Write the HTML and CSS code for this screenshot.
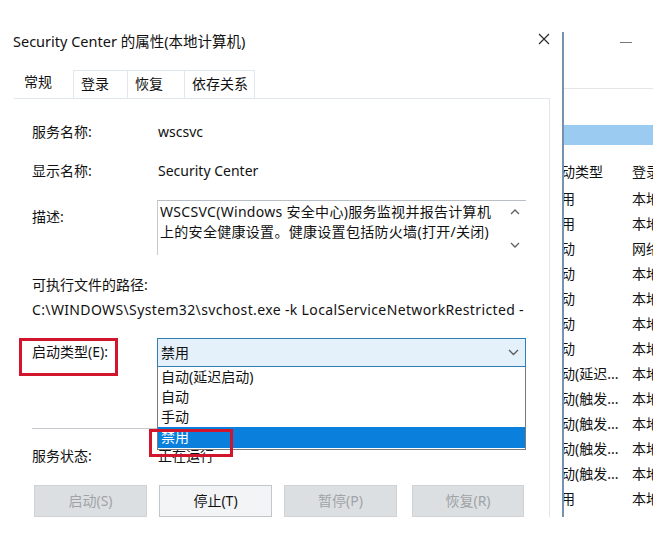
FILE: index.html
```html
<!DOCTYPE html>
<html lang="zh-CN">
<head>
<meta charset="utf-8">
<title>Security Center 的属性</title>
<link rel="stylesheet" href="styles.css">
</head>
<body>
<div class="screen">
  <div class="dialog">
    <div class="titlebar">
      <span class="title">Security Center 的属性(本地计算机)</span>
      <svg class="close" width="12" height="12" viewBox="0 0 12 12"><path d="M1 1L11 11M11 1L1 11" stroke="#2b2b2b" stroke-width="1.2" fill="none"/></svg>
    </div>
    <div class="tabs">
      <div class="tab tab-active">常规</div>
      <div class="tab">登录</div>
      <div class="tab">恢复</div>
      <div class="tab tab-last">依存关系</div>
    </div>
    <div class="panel">
      <div class="row row-name"><span class="label">服务名称:</span><span class="value">wscsvc</span></div>
      <div class="row row-display"><span class="label">显示名称:</span><span class="value">Security Center</span></div>
      <div class="row row-desc">
        <span class="label desc-label">描述:</span>
        <div class="textbox">
          <div class="textbox-text">WSCSVC(Windows 安全中心)服务监视并报告计算机<br>上的安全健康设置。健康设置包括防火墙(打开/关闭)</div>
          <div class="scroll">
            <svg width="10" height="6" viewBox="0 0 10 6"><path d="M1 5L5 1L9 5" stroke="#606060" stroke-width="1.3" fill="none"/></svg>
            <svg width="10" height="6" viewBox="0 0 10 6"><path d="M1 1L5 5L9 1" stroke="#606060" stroke-width="1.3" fill="none"/></svg>
          </div>
        </div>
      </div>
      <div class="path-label">可执行文件的路径:</div>
      <div class="path">C:\WINDOWS\System32\svchost.exe -k LocalServiceNetworkRestricted -p</div>
      <div class="row row-start">
        <span class="label mark">启动类型(E):</span>
        <div class="select">
          <span class="select-value">禁用</span>
          <svg class="chevron" width="11" height="7" viewBox="0 0 11 7"><path d="M1 1L5.5 5.5L10 1" stroke="#5a5a5a" stroke-width="1.3" fill="none"/></svg>
          <div class="options">
            <div class="option">自动(延迟启动)</div>
            <div class="option">自动</div>
            <div class="option">手动</div>
            <div class="option option-selected">禁用</div>
            <div class="mark mark-option"></div>
          </div>
        </div>
      </div>
      <div class="sep"></div>
      <div class="row row-status"><span class="label">服务状态:</span><span class="value">正在运行</span></div>
      <div class="buttons">
        <div class="btn btn-disabled">启动(S)</div>
        <div class="btn">停止(T)</div>
        <div class="btn btn-disabled">暂停(P)</div>
        <div class="btn btn-disabled btn-last">恢复(R)</div>
      </div>
    </div>
  </div>
  <div class="bg-window">
    <div class="bw-top"><span class="bw-min"></span></div>
    <div class="bw-bar"></div>
    <div class="bw-head"><span class="c1"><span class="cut">启动类型</span></span><span class="c2">登录为</span></div>
    <div class="bw-row"><span class="c1"><span class="cut">禁用</span></span><span class="c2">本地系统</span></div>
    <div class="bw-row"><span class="c1"><span class="cut">禁用</span></span><span class="c2">本地系统</span></div>
    <div class="bw-row"><span class="c1"><span class="cut">自动</span></span><span class="c2">网络服务</span></div>
    <div class="bw-row"><span class="c1"><span class="cut">自动</span></span><span class="c2">本地系统</span></div>
    <div class="bw-row"><span class="c1"><span class="cut">自动</span></span><span class="c2">本地系统</span></div>
    <div class="bw-row"><span class="c1"><span class="cut">手动</span></span><span class="c2">本地系统</span></div>
    <div class="bw-row"><span class="c1"><span class="cut">手动</span></span><span class="c2">本地系统</span></div>
    <div class="bw-row"><span class="c1"><span class="cut">自动(延迟...</span></span><span class="c2">本地系统</span></div>
    <div class="bw-row"><span class="c1"><span class="cut">手动(触发...</span></span><span class="c2">本地服务</span></div>
    <div class="bw-row"><span class="c1"><span class="cut">手动(触发...</span></span><span class="c2">本地系统</span></div>
    <div class="bw-row"><span class="c1"><span class="cut">手动(触发...</span></span><span class="c2">本地系统</span></div>
    <div class="bw-row"><span class="c1"><span class="cut">手动(触发...</span></span><span class="c2">本地系统</span></div>
    <div class="bw-row"><span class="c1"><span class="cut">禁用</span></span><span class="c2">本地系统</span></div>
  </div>
</div>
</body>
</html>
```
FILE: styles.css
```css
* { box-sizing: border-box; }
html, body { margin: 0; padding: 0; background: #fff; }
body {
  font-family: "Noto Sans", "Noto Sans CJK SC", sans-serif;
  font-size: 14px;
  color: #111;
}
.screen {
  width: 653px;
  height: 541px;
  display: flex;
  overflow: hidden;
}
.dialog {
  width: 562px;
  flex: none;
  position: relative;
}
.titlebar {
  height: 70px;
  display: flex;
  align-items: flex-start;
  justify-content: space-between;
  padding: 31px 12px 0 13px;
}
.title { line-height: 20px; font-size: 14.5px; }
.close { margin-top: 2px; }

.tabs {
  height: 28px;
  display: flex;
  padding-left: 14px;
}
.tab {
  line-height: 26px;
  height: 28px;
  padding: 0 0 0 7px;
  border: 1px solid #e1e7ee;
  border-bottom: none;
  border-left: none;
  width: 55px;
}
.tab:nth-child(2) { border-left: 1px solid #e1e7ee; }
.tab:nth-child(3) { width: 57px; }
.tab-active { width: 59px; border: none; padding-left: 10px; line-height: 24px; }
.tab-last { width: 70px; }

.panel {
  margin-left: 14px;
  width: 536px;
  height: 419px;
  border-top: 1px solid #e1e7ee;
  border-right: 1px solid #e1e7ee;
  padding: 0 0 0 18px;
}
.row { display: flex; line-height: 20px; }
.label { width: 126px; flex: none; }
.row-name { margin-top: 23px; }
.row-display { margin-top: 19px; }
.row-desc { margin-top: 19px; }
.desc-label { padding-top: 7px; }
.textbox {
  width: 369px;
  height: 55px;
  margin-left: -1px;
  border-top: 1px solid #b9bec4;
  border-left: 1px solid #c5cad0;
  display: flex;
  justify-content: space-between;
}
.textbox-text { padding: 1px 0 0 2px; line-height: 20px; letter-spacing: 0.3px; white-space: nowrap; }
.scroll {
  width: 22px;
  display: flex;
  flex-direction: column;
  align-items: center;
  padding-top: 8px;
  gap: 27px;
}
.path-label { margin-top: 20px; line-height: 20px; }
.path {
  margin-top: 5px;
  line-height: 20px;
  width: 492px;
  white-space: nowrap;
  overflow: hidden;
  letter-spacing: 0.36px;
}
.row-start { margin-top: 18px; align-items: flex-start; margin-left: -13px; }
.mark { border: 3px solid #d0152d; }
.row-start .label {
  width: 99px;
  height: 38px;
  padding: 1px 0 0 10px;
}
.select {
  position: relative;
  margin-left: 39px;
  width: 369px;
  height: 29px;
  background: #e4f1fb;
  border: 1px solid #2f7eb5;
  display: flex;
  align-items: center;
  justify-content: space-between;
  padding: 0 6px 0 3px;
}
.select-value { line-height: 20px; }
.options {
  position: absolute;
  left: -1px;
  top: calc(100% + 1px);
  width: 369px;
  height: 83px;
  background: #fff;
  border: 1px solid #7a7a7a;
  border-top: none;
  z-index: 2;
}
.option { height: 20px; line-height: 20px; padding-left: 3px; }
.option-selected { height: 21px; background: #0a7fdc; color: #fff; }
.mark-option {
  position: absolute;
  left: -9px;
  top: 62px;
  width: 84px;
  height: 28px;
}
.sep {
  margin-top: 52px;
  width: 494px;
  height: 1px;
  background: #c5c9cd;
}
.row-status { margin-top: 17px; }
.buttons {
  margin-top: 19px;
  margin-left: 2px;
  display: flex;
  gap: 12px;
}
.btn {
  width: 113px;
  height: 32px;
  line-height: 30px;
  text-align: center;
  background: #f3f4f5;
  border: 1px solid #c3c6c9;
}
.btn-disabled {
  background: #dcdfe2;
  border-color: #d0d3d6;
  color: #a0a3a6;
}
.btn-last { margin-left: 3px; width: 112px; }

.bg-window {
  flex: 1;
  margin-top: 32px;
  height: 485px;
  border-left: 2px solid #7593b0;
  overflow: hidden;
  white-space: nowrap;
}
.bw-top {
  height: 57px;
  border-bottom: 1px solid #e3e6e9;
  padding: 10px 0 0 56px;
}
.bw-min { display: block; width: 12px; height: 1px; background: #777; }
.bw-bar {
  margin-top: 36px;
  height: 20px;
  background: #9ccbf1;
}
.bw-head { padding-top: 17px; height: 42px; }
.bw-head, .bw-row { display: flex; line-height: 20px; }
.bw-row { height: 25px; padding-top: 2px; }
.c1 { width: 68px; overflow: hidden; flex: none; }
.cut { display: block; margin-left: -17px; }
.c2 { flex: none; }
```
